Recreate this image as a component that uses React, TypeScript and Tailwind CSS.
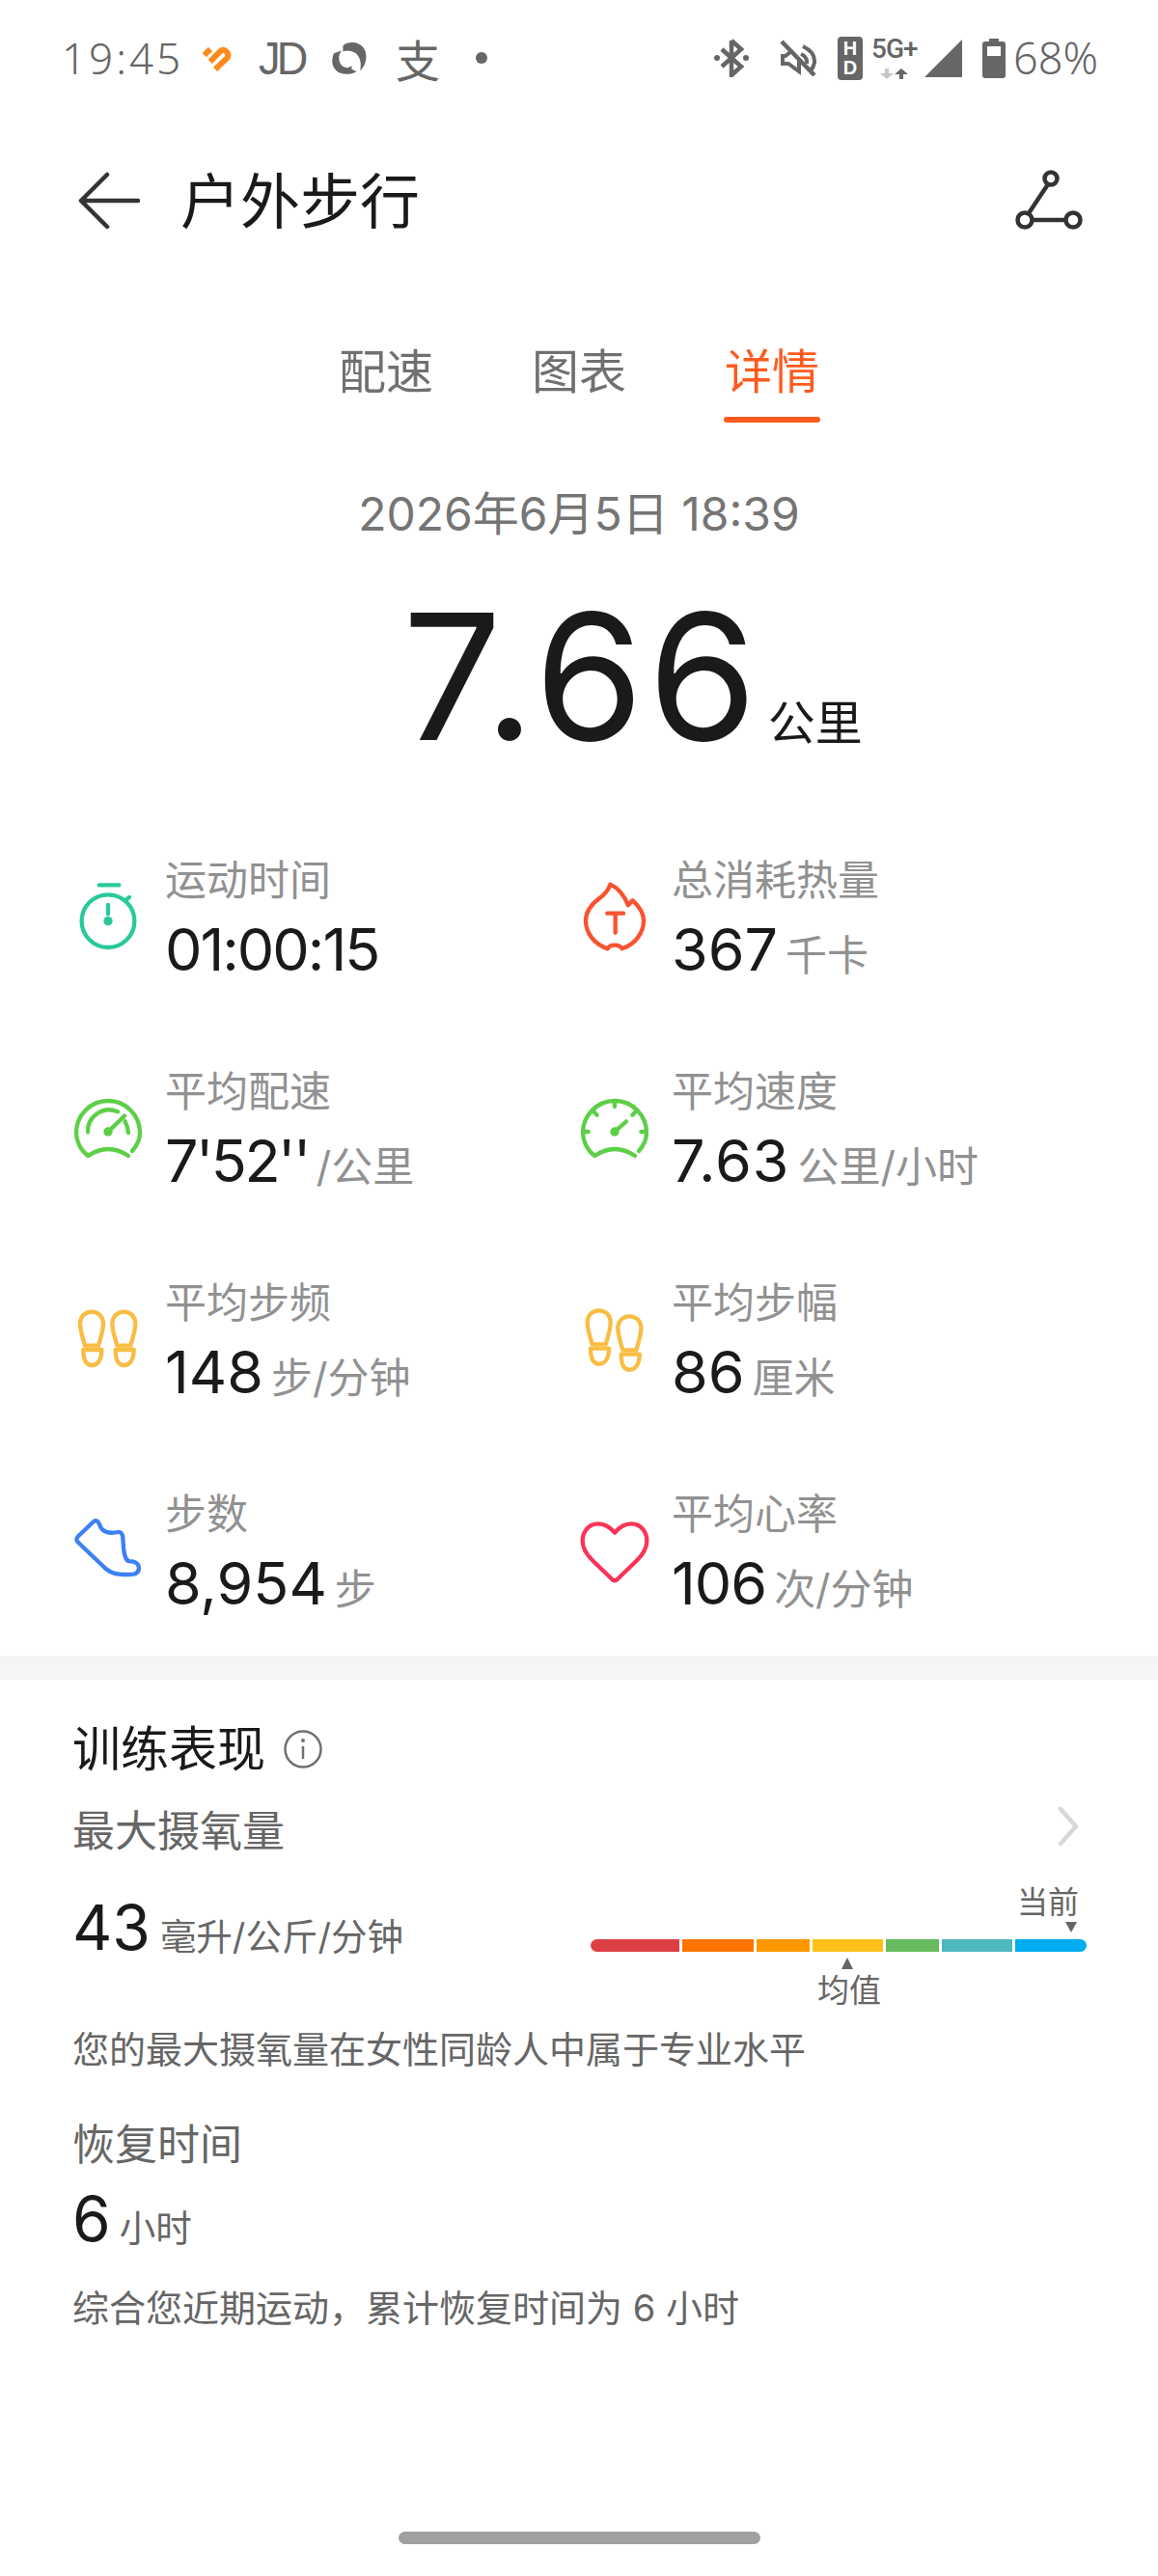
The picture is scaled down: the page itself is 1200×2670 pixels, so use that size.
import React from 'react';

const Stopwatch = () => (
  <svg viewBox="0 0 240 240" className="w-20 h-20" fill="none" stroke="#2ac99b" strokeWidth="13" strokeLinecap="round">
    <circle cx="120" cy="134" r="82" />
    <path d="M92 22H154M172 71L186 60M120 84V112" />
    <circle cx="120" cy="134" r="14" fill="#2ac99b" stroke="none" />
  </svg>
);

const Flame = () => (
  <svg viewBox="0 0 240 240" className="w-20 h-20" fill="none" stroke="#fa5230" strokeWidth="13" strokeLinecap="round" strokeLinejoin="round">
    <path d="M106 20C130 30 150 55 162 85L176 70C198 90 210 110 210 133C210 170 185 205 143 220C135 205 105 205 98 220C55 205 30 170 30 133C30 100 50 80 70 65C85 55 100 40 106 20Z" />
    <path d="M97 110H147M122 110V170" />
  </svg>
);

const PaceGauge = () => (
  <svg viewBox="0 0 240 240" className="w-20 h-20" fill="none" stroke="#5ccf47" strokeWidth="13" strokeLinecap="round">
    <path d="M58 207C30 185 21 155 21 135A99 99 0 0 1 219 135C219 155 210 175 195 192M58 207Q120 165 183 207" />
    <path d="M57 133A66 66 0 0 1 150 70M173 100Q181 117 183 135M120 132L171 83" />
    <circle cx="120" cy="132" r="14" fill="#5ccf47" stroke="none" />
  </svg>
);

const SpeedGauge = () => (
  <svg viewBox="0 0 240 240" className="w-20 h-20" fill="none" stroke="#5ccf47" strokeWidth="13" strokeLinecap="round">
    <path d="M58 207C30 185 21 155 21 135A99 99 0 0 1 219 135C219 155 210 175 195 192M58 207Q120 165 183 207" />
    <path d="M120 40V54M55 70L65 80M185 70L175 80M24 132H38M216 132H202M120 132L156 100" />
    <circle cx="120" cy="132" r="14" fill="#5ccf47" stroke="none" />
  </svg>
);

const Foot = ({ x, y }: { x: number; y: number }) => (
  <g transform={`translate(${x} ${y})`}>
    <path d="M48 142C38 110 33 90 33 75C33 50 50 37 69 37C88 37 105 50 105 75C105 90 100 110 90 142Z" />
    <path d="M43 155H100C100 185 88 203 70 203C52 203 43 185 43 155Z" />
  </g>
);

const Feet = ({ stagger }: { stagger?: boolean }) => (
  <svg viewBox="0 0 240 240" className="w-20 h-20" fill="none" stroke="#f8bd42" strokeWidth="13" strokeLinejoin="round">
    {stagger ? (
      <>
        <Foot x={2} y={-6} />
        <Foot x={97} y={12} />
      </>
    ) : (
      <>
        <Foot x={0} y={-2} />
        <Foot x={100} y={-2} />
      </>
    )}
  </svg>
);

const Shoe = () => (
  <svg viewBox="0 0 240 240" className="w-20 h-20" fill="none" stroke="#3d80f5" strokeWidth="13" strokeLinejoin="round">
    <path
      transform="translate(0 -9)"
      d="M28 84L72 42C82 32 90 38 94 50C100 72 125 78 150 72C160 70 165 78 166 90C168 120 168 165 190 163C210 162 220 178 214 192C208 205 195 204 175 204C150 205 130 200 113 186L28 105C20 98 20 92 28 84Z"
    />
  </svg>
);

const Heart = () => (
  <svg viewBox="0 0 240 240" className="w-20 h-20" fill="none" stroke="#fb3359" strokeWidth="13" strokeLinejoin="round">
    <path
      transform="translate(0 5)"
      d="M120 60C100 35 80 32 68 32C38 32 20 58 20 85C20 110 35 130 50 145L112 205Q120 212 128 205L190 145C205 130 220 110 220 85C220 58 202 32 172 32C160 32 140 35 120 60Z"
    />
  </svg>
);

const stats = [
  { icon: <Stopwatch />, label: '运动时间', value: '01:00:15', unit: '', track: 'tracking-[-2px]' },
  { icon: <Flame />, label: '总消耗热量', value: '367', unit: '千卡', track: 'tracking-normal' },
  { icon: <PaceGauge />, label: '平均配速', value: "7'52''", unit: '/公里', track: 'tracking-[-2.5px]' },
  { icon: <SpeedGauge />, label: '平均速度', value: '7.63', unit: '公里/小时', track: 'tracking-[1px]' },
  { icon: <Feet />, label: '平均步频', value: '148', unit: '步/分钟', track: 'tracking-normal' },
  { icon: <Feet stagger />, label: '平均步幅', value: '86', unit: '厘米', track: 'tracking-normal' },
  { icon: <Shoe />, label: '步数', value: '8,954', unit: '步', track: 'tracking-normal' },
  { icon: <Heart />, label: '平均心率', value: '106', unit: '次/分钟', track: 'tracking-[-1px]' },
];

const segments = [
  { color: 'bg-[#dc4045] rounded-l-full', width: 'w-[92px]' },
  { color: 'bg-[#ff7300]', width: 'w-[74px]' },
  { color: 'bg-[#ff9800]', width: 'w-[55px]' },
  { color: 'bg-[#ffc119]', width: 'w-[73px]' },
  { color: 'bg-[#66bb5f]', width: 'w-[55px]' },
  { color: 'bg-[#4db8bf]', width: 'w-[73px]' },
  { color: 'bg-[#00adef] rounded-r-full', width: 'w-[74px]' },
];

const StatusBar = () => (
  <div className="h-[120px] flex items-center justify-between pl-[64px] pr-[62px] text-[#666666]">
    <div className="flex items-center">
      <span className="text-[44px] font-light w-[123px] tracking-[3px] font-['Noto_Sans',sans-serif]">19:45</span>
      <svg viewBox="0 0 93 80" className="w-[31px] h-[27px] ml-[22px]" fill="none" stroke="#ff8a1c" strokeWidth="18">
        <path d="M8 30L27 11M26 50L58 18Q68 8 78 20Q86 30 78 40L42 74" />
      </svg>
      <span className="ml-[28px] w-[49px] text-[49px] leading-none font-medium tracking-[-4px] origin-left scale-x-[0.92] font-['Liberation_Sans',sans-serif]">JD</span>
      <svg viewBox="0 0 107 100" className="w-9 h-[34px] ml-[27px]" fill="#666666">
        <path d="M34 12C50 -2 82 -2 98 20C110 40 108 70 86 90C92 70 88 45 70 34C58 27 46 26 34 30Z" />
        <path d="M6 36C-4 60 0 85 24 96C42 103 62 100 76 92L60 84L62 74C50 84 34 82 26 68C19 56 20 40 30 28Z" />
      </svg>
      <span className="ml-[30px] w-[46px] text-[46px] leading-none font-['Noto_Sans_CJK_SC',sans-serif]">支</span>
      <span className="ml-[37px] w-3 h-3 rounded-full bg-[#666666]" />
    </div>
    <div className="flex items-center">
      <svg viewBox="0 0 36 40" className="w-9 h-10" fill="none" stroke="#666666" strokeWidth="4.5">
        <path d="M18 2V38L28 29L8 11M18 2L28 11L8 29" />
        <circle cx="3" cy="20" r="3" fill="#666666" stroke="none" />
        <circle cx="33" cy="20" r="3" fill="#666666" stroke="none" />
      </svg>
      <svg viewBox="0 0 39 38" className="w-[39px] h-[38px] ml-[32px]" fill="none" stroke="#666666" strokeWidth="4">
        <path d="M12 12L6 17H3V25H9L20 33V22" />
        <path d="M24 7Q37 13 36 24Q35 29 32 32M22 15Q29 18 28 25" />
        <path d="M2 2L36 37" strokeWidth="4.5" />
      </svg>
      <div className="ml-[21px] w-[26px] h-[45px] rounded-[4px] bg-[#666666] text-white flex flex-col items-center justify-center text-[20px] leading-[20px] font-bold font-['Liberation_Sans',sans-serif]">
        <span>H</span>
        <span>D</span>
      </div>
      <div className="ml-[9px] w-[48px] h-[44px] flex flex-col items-start">
        <span className="text-[28px] leading-[26px] font-medium tracking-[-1px] font-['Roboto',sans-serif]">5G+</span>
        <svg viewBox="0 0 48 11" className="w-12 h-[11px] mt-[7px]">
          <path d="M14 0H18V5H23L16 11L9 5H14Z" fill="#c8c8c8" />
          <path d="M29 11V6H24L31 0L38 6H33V11Z" fill="#666666" />
        </svg>
      </div>
      <svg viewBox="0 0 39 39" className="w-[39px] h-[39px] ml-[7px]" fill="#666666">
        <path d="M39 0V39H0Z" />
      </svg>
      <svg viewBox="0 0 24 41" className="w-6 h-[41px] ml-[21px]">
        <path d="M7 0H17V3H21Q24 3 24 6V38Q24 41 21 41H3Q0 41 0 38V6Q0 3 3 3H7Z" fill="#666666" />
        <rect x="5" y="8" width="14" height="10" fill="#ffffff" />
      </svg>
      <span className="ml-2 text-[45px] font-light font-['Noto_Sans',sans-serif]">68%</span>
    </div>
  </div>
);

export default function App() {
  return (
    <div className="w-[1200px] h-[2670px] bg-white overflow-hidden font-['Inter','Noto_Sans_CJK_SC',sans-serif]">
      <StatusBar />

      <div className="mt-[38px] h-[100px] flex items-center justify-between pl-[80px] pr-[76px]">
        <div className="flex items-center">
          <svg viewBox="0 0 66 60" className="w-[66px] h-[60px]" fill="none" stroke="#333333" strokeWidth="4.5" strokeLinecap="round" strokeLinejoin="round">
            <path d="M31 3L4 30L31 57M4 30H63" />
          </svg>
          <h1 className="ml-[41px] -mt-[6px] text-[62px] leading-none text-[#1a1a1a] font-['Noto_Sans_CJK_SC',sans-serif]">户外步行</h1>
        </div>
        <svg viewBox="0 0 72 64" className="w-[72px] h-16" fill="none" stroke="#333333" strokeWidth="4.5">
          <circle cx="37" cy="9" r="6.5" />
          <circle cx="10" cy="52" r="7.5" />
          <circle cx="60" cy="52" r="7.5" />
          <path d="M34 15L14 45M18 52H52" />
        </svg>
      </div>

      <div className="mt-[94px] flex justify-center gap-[100px] text-[49px] leading-[60px] text-[#707070] font-['Noto_Sans_CJK_SC',sans-serif]">
        <span className="w-[100px] text-center">配速</span>
        <span className="w-[100px] text-center">图表</span>
        <div className="w-[100px] flex flex-col items-center text-[#ff5a1f]">
          <span>详情</span>
          <div className="mt-5 w-full h-[6px] rounded-full bg-[#ff5a1f]" />
        </div>
      </div>

      <div className="mt-[65px] text-center text-[48px] leading-[60px] text-[#757575]">2026年6月5日 18:39</div>

      <div className="mt-[38px] h-[200px] pl-[417px] flex items-baseline text-[#1a1a1a]">
        <span className="text-[182px] leading-[200px] tracking-[4.5px]">7.66</span>
        <span className="ml-[7px] text-[49px]">公里</span>
      </div>

      <div className="mt-[79px] pl-[72px] grid grid-cols-[525px_1fr] gap-y-[79px]">
        {stats.map((s) => (
          <div key={s.label} className="h-[140px] flex items-center gap-[19px]">
            {s.icon}
            <div className="pt-1">
              <div className="text-[43px] leading-[56px] text-[#919191]">{s.label}</div>
              <div className="mt-2 h-[72px] flex items-baseline leading-[72px]">
                <span className={`text-[61px] text-[#1a1a1a] ${s.track}`}>{s.value}</span>
                {s.unit && <span className="ml-2 text-[43px] text-[#919191]">{s.unit}</span>}
              </div>
            </div>
          </div>
        ))}
      </div>

      <div className="mt-[39px] h-[25px] bg-[#f5f5f5]" />

      <div className="pl-[75px]">
        <div className="mt-[42px] flex items-center">
          <h2 className="text-[50px] leading-[60px] text-[#1a1a1a]">训练表现</h2>
          <svg viewBox="0 0 40 40" className="w-10 h-10 ml-[19px]" fill="none" stroke="#707070" strokeWidth="2.5">
            <circle cx="20" cy="20" r="18.5" />
            <path d="M20 17V30" />
            <circle cx="20" cy="11" r="2" fill="#707070" stroke="none" />
          </svg>
        </div>

        <div className="mt-[27px] flex items-center justify-between pr-[82px]">
          <span className="text-[44px] leading-[56px] text-[#666666]">最大摄氧量</span>
          <svg viewBox="0 0 22 42" className="w-[22px] h-[42px] -mt-[10px]" fill="none" stroke="#d8d8d8" strokeWidth="4.5" strokeLinecap="round" strokeLinejoin="round">
            <path d="M3 3L19 21L3 39" />
          </svg>
        </div>

        <div className="mt-[26px] flex items-start justify-between pr-[74px]">
          <div className="mt-px flex items-baseline leading-[90px]">
            <span className="text-[64px] text-[#1a1a1a]">43</span>
            <span className="ml-[10px] text-[37.5px] text-[#666666]">毫升/公斤/分钟</span>
          </div>
          <div className="w-[514px] text-[#666666]">
            <div className="pr-2 text-right text-[32px] leading-10">当前</div>
            <div className="flex justify-end pr-[10px]">
              <div className="w-0 h-0 border-x-[6px] border-x-transparent border-t-[11px] border-t-[#666666]" />
            </div>
            <div className="mt-[7px] flex gap-[3px]">
              {segments.map((seg) => (
                <div key={seg.color} className={`h-[13px] ${seg.width} ${seg.color}`} />
              ))}
            </div>
            <div className="mt-[6px] ml-[260px] w-0 h-0 border-x-[6px] border-x-transparent border-b-[12px] border-b-[#666666]" />
            <div className="mt-[2px] ml-[235px] text-[33px] leading-10">均值</div>
          </div>
        </div>

        <p className="mt-[16px] text-[38px] leading-[50px] text-[#666666]">您的最大摄氧量在女性同龄人中属于专业水平</p>

        <div className="mt-[46px] text-[44px] leading-[56px] text-[#666666]">恢复时间</div>
        <div className="mt-[9px] flex items-baseline leading-[80px]">
          <span className="text-[64px] text-[#1a1a1a]">6</span>
          <span className="ml-[9px] text-[37.5px] text-[#666666]">小时</span>
        </div>
        <p className="mt-[17px] text-[38px] leading-[50px] text-[#666666]">综合您近期运动，累计恢复时间为 6 小时</p>
      </div>

      <div className="mt-[207px] mx-auto w-[375px] h-[13px] rounded-full bg-[#a0a0a0]" />
    </div>
  );
}
